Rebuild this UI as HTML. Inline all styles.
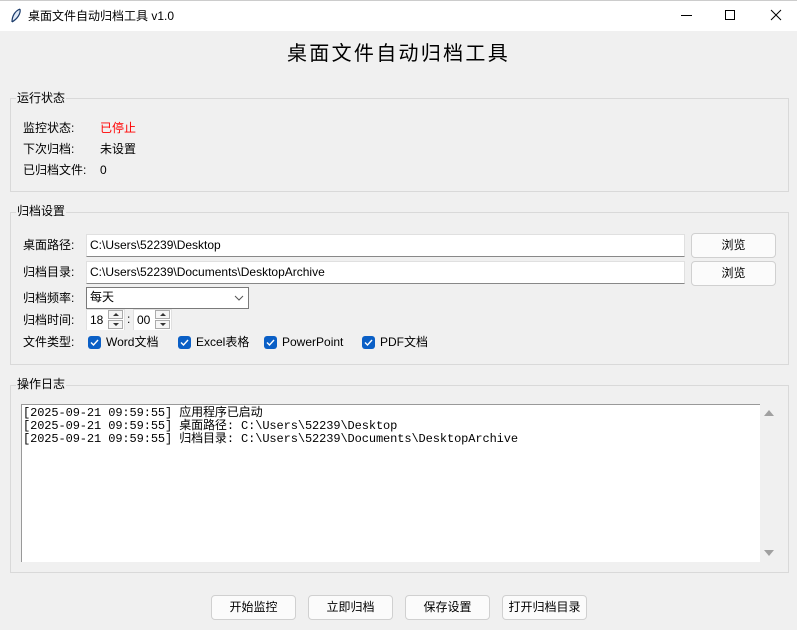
<!DOCTYPE html>
<html><head><meta charset="utf-8"><style>
*{box-sizing:border-box;margin:0;padding:0}
body{width:797px;height:630px;background:#f0f0f0;font-family:"Liberation Sans","Noto Sans CJK SC",sans-serif;font-size:12px;line-height:16px;color:#000;position:relative;overflow:hidden}
.a{position:absolute;white-space:nowrap}
.tb{left:0;top:0;width:797px;height:31px;background:#fff;border-top:1px solid #ccc}
.grp{border:1px solid #d9d9d9}
.lbl{background:#f0f0f0;padding:0 1px;line-height:14px}
.ent{background:#fff;border:1px solid #e0e0e0;border-bottom:1px solid #888;padding-left:3px;line-height:20px}
.btn{background:#fbfbfb;border:1px solid #d0d0d0;border-radius:4px;text-align:center;line-height:22px}
.cb{width:13px;height:13px;background:#0a5fc6;border-radius:3px}
.log{background:#fff;border-top:1px solid #999;font-family:"Liberation Mono","Noto Sans CJK SC",monospace;font-size:12px;letter-spacing:-0.1px;line-height:13px;padding:2px 0 0 2px}
</style></head><body>
<div class="a tb"></div>
<svg class="a" style="left:10px;top:8px" width="12" height="16" viewBox="0 0 12 16"><path d="M10 1 C5 3 2 8 2 14 M10 1 C11 6 7 11 2 14" stroke="#1a3a6a" fill="#dfe8f5" stroke-width="1.2"/></svg>
<div class="a" style="left:28px;top:8px;font-size:12px">桌面文件自动归档工具 v1.0</div>
<div class="a" style="left:681px;top:15px;width:11px;height:1px;background:#000"></div>
<div class="a" style="left:725px;top:10px;width:10px;height:10px;border:1px solid #000"></div>
<svg class="a" style="left:770px;top:9px" width="12" height="12"><path d="M1 1L11 11M11 1L1 11" stroke="#000" stroke-width="1"/></svg>
<div class="a" style="left:0;width:797px;top:41px;text-align:center;font-size:20px;letter-spacing:2.3px;line-height:26px">桌面文件自动归档工具</div>

<div class="a grp" style="left:10px;top:98px;width:779px;height:94px"></div>
<div class="a lbl" style="left:16px;top:91px">运行状态</div>
<div class="a" style="left:23px;top:120px">监控状态:</div><div class="a" style="left:100px;top:120px;color:#f00">已停止</div>
<div class="a" style="left:23px;top:141px">下次归档:</div><div class="a" style="left:100px;top:141px">未设置</div>
<div class="a" style="left:23px;top:162px">已归档文件:</div><div class="a" style="left:100px;top:162px">0</div>

<div class="a grp" style="left:10px;top:212px;width:779px;height:153px"></div>
<div class="a lbl" style="left:16px;top:204px">归档设置</div>
<div class="a" style="left:23px;top:237px">桌面路径:</div>
<div class="a ent" style="left:86px;top:234px;width:599px;height:23px">C:\Users\52239\Desktop</div>
<div class="a btn" style="left:691px;top:233px;width:85px;height:25px">浏览</div>
<div class="a" style="left:23px;top:264px">归档目录:</div>
<div class="a ent" style="left:86px;top:261px;width:599px;height:23px">C:\Users\52239\Documents\DesktopArchive</div>
<div class="a btn" style="left:691px;top:261px;width:85px;height:25px">浏览</div>
<div class="a" style="left:23px;top:290px">归档频率:</div>
<div class="a ent" style="left:86px;top:287px;width:163px;height:22px;border:1px solid #7a7a7a;line-height:19px">每天</div>
<svg class="a" style="left:234px;top:295px" width="10" height="6"><path d="M1 1L5 5L9 1" stroke="#555" fill="none"/></svg>
<div class="a" style="left:23px;top:312px">归档时间:</div>
<div class="a ent" style="left:86px;top:309px;width:39px;height:21px;border-bottom:none;line-height:20px">18</div>
<div class="a" style="left:108px;top:310px;width:15px;height:9px;border:1px solid #aaa;background:#f5f5f5"></div>
<div class="a" style="left:108px;top:320px;width:15px;height:9px;border:1px solid #aaa;background:#f5f5f5"></div>
<svg class="a" style="left:112px;top:312px" width="8" height="16"><path d="M1 4L4 1L7 4Z M1 11L7 11L4 14Z" fill="#333"/></svg>
<div class="a" style="left:127px;top:311px">:</div>
<div class="a ent" style="left:133px;top:309px;width:39px;height:21px;border-bottom:none;line-height:20px">00</div>
<div class="a" style="left:155px;top:310px;width:15px;height:9px;border:1px solid #aaa;background:#f5f5f5"></div>
<div class="a" style="left:155px;top:320px;width:15px;height:9px;border:1px solid #aaa;background:#f5f5f5"></div>
<svg class="a" style="left:159px;top:312px" width="8" height="16"><path d="M1 4L4 1L7 4Z M1 11L7 11L4 14Z" fill="#333"/></svg>
<div class="a" style="left:23px;top:334px">文件类型:</div>
<div class="a cb" style="left:88px;top:336px"></div><div class="a" style="left:106px;top:334px">Word文档</div>
<div class="a cb" style="left:178px;top:336px"></div><div class="a" style="left:196px;top:334px">Excel表格</div>
<div class="a cb" style="left:264px;top:336px"></div><div class="a" style="left:282px;top:334px">PowerPoint</div>
<div class="a cb" style="left:362px;top:336px"></div><div class="a" style="left:380px;top:334px">PDF文档</div>
<svg class="a" style="left:88px;top:336px" width="300" height="13"><g stroke="#fff" stroke-width="1.4" fill="none"><path d="M3 6.5L5.5 9L10 4"/><path transform="translate(90)" d="M3 6.5L5.5 9L10 4"/><path transform="translate(176)" d="M3 6.5L5.5 9L10 4"/><path transform="translate(274)" d="M3 6.5L5.5 9L10 4"/></g></svg>

<div class="a grp" style="left:10px;top:385px;width:779px;height:188px"></div>
<div class="a lbl" style="left:16px;top:377px">操作日志</div>
<div class="a log" style="left:21px;top:404px;width:739px;height:158px">[2025-09-21 09:59:55] 应用程序已启动<br>[2025-09-21 09:59:55] 桌面路径: C:\Users\52239\Desktop<br>[2025-09-21 09:59:55] 归档目录: C:\Users\52239\Documents\DesktopArchive</div>
<div class="a" style="left:21px;top:405px;width:1px;height:157px;background:#999"></div>
<svg class="a" style="left:764px;top:409px" width="10" height="8"><path d="M0 7L5 1L10 7Z" fill="#a0a0a0"/></svg>
<svg class="a" style="left:764px;top:549px" width="10" height="8"><path d="M0 1L10 1L5 7Z" fill="#a0a0a0"/></svg>

<div class="a btn" style="left:211px;top:595px;width:85px;height:25px">开始监控</div>
<div class="a btn" style="left:308px;top:595px;width:85px;height:25px">立即归档</div>
<div class="a btn" style="left:405px;top:595px;width:85px;height:25px">保存设置</div>
<div class="a btn" style="left:502px;top:595px;width:85px;height:25px">打开归档目录</div>
</body></html>
